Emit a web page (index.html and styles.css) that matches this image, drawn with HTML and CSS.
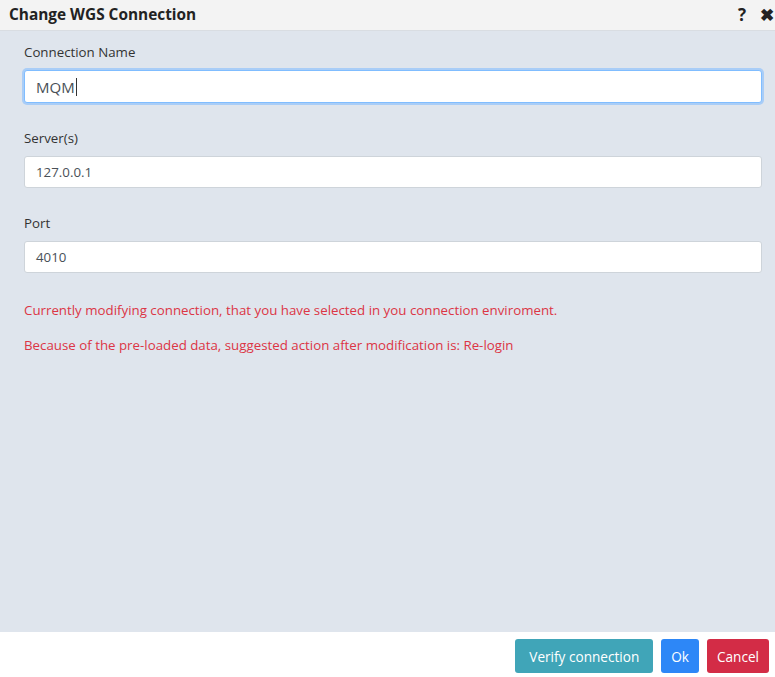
FILE: index.html
```html
<!DOCTYPE html>
<html>
<head>
    <title>Change WGS Connection</title>
    <link rel="stylesheet" href="styles.css">
</head>
<body>
<div class="dialog">
    <div class="dialog-header">
        <span class="dialog-title">Change WGS Connection</span>
        <span class="dialog-tools">
            <span class="tool">?</span>
            <span class="tool">&#x2716;</span>
        </span>
    </div>
    <div class="dialog-body">
        <div class="field">
            <label>Connection Name</label>
            <div class="input focused">MQM<span class="caret"></span></div>
        </div>
        <div class="field">
            <label>Server(s)</label>
            <div class="input">127.0.0.1</div>
        </div>
        <div class="field">
            <label>Port</label>
            <div class="input">4010</div>
        </div>
        <p class="warn">Currently modifying connection, that you have selected in you connection enviroment.</p>
        <p class="warn">Because of the pre-loaded data, suggested action after modification is: Re-login</p>
    </div>
    <div class="dialog-footer">
        <button class="btn btn-info">Verify connection</button>
        <button class="btn btn-primary">Ok</button>
        <button class="btn btn-danger">Cancel</button>
    </div>
</div>
</body>
</html>
```

FILE: styles.css
```css
html, body {
    margin:0;
    padding:0;
    background:#ffffff;
}

.dialog {
    width:775px;
    height:677px;
    display:flex;
    flex-direction:column;
    font-family: "Open Sans", "Noto Sans", sans-serif;
    font-size:13.3px;
    line-height:18px;
    color:#333333;
}

.dialog-header {
    height:31px;
    box-sizing:border-box;
    background:#f3f3f3;
    border-bottom:1px solid #d9dde2;
    display:flex;
    align-items:center;
    justify-content:space-between;
    padding:0 1px 0 9px;
}

.dialog-title {
    font-weight:bold;
    font-size:15.4px;
    color:#222222;
}

.dialog-tools {
    display:flex;
    gap:14px;
}

.tool {
    font-weight:bold;
    font-size:17px;
    color:#222222;
}

.dialog-body {
    flex:1;
    background:#dfe5ed;
    padding:12px 13px 0 24px;
}

.field label {
    display:block;
    margin-bottom:9px;
}

.field {
    margin-bottom:26px;
}

.input {
    height:32px;
    box-sizing:border-box;
    background:#ffffff;
    border:1px solid #ced4da;
    border-radius:3px;
    padding:0 11px;
    display:flex;
    align-items:center;
    color:#495057;
}

.input.focused {
    height:33px;
    border-color:#80bdff;
    box-shadow:0 0 0 2px #a9cdf7;
    font-size:15px;
}

.caret {
    display:inline-block;
    width:1px;
    height:18px;
    background:#333333;
    margin-left:1px;
}

.warn {
    color:#dc3545;
    margin:0;
    padding-top:2px;
}

.warn + .warn {
    margin-top:15px;
}

.dialog-footer {
    height:45px;
    display:flex;
    justify-content:flex-end;
    align-items:flex-start;
    gap:8px;
    padding:7px 6px 0 0;
    box-sizing:border-box;
}

.btn {
    font-family:inherit;
    font-size:13.6px;
    color:#ffffff;
    border:none;
    border-radius:3px;
    height:34px;
    padding:0 14px;
}

.btn-info { background:#40a5b8; }
.btn-primary { background:#2d87f7; padding:0 10px; }
.btn-danger { background:#d32c46; padding:0 10px; }
```
